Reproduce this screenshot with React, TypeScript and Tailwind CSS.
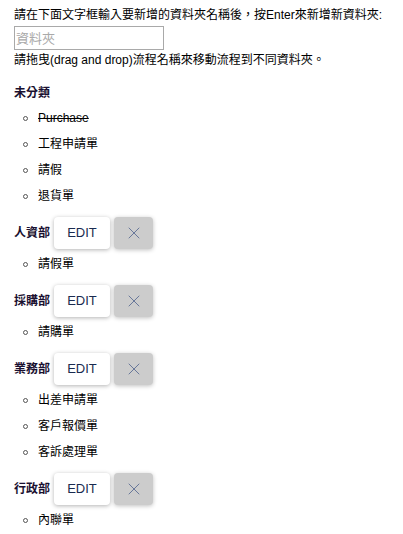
import { X } from "lucide-react";

interface Folder {
  name: string;
  flows: string[];
}

const folders: Folder[] = [
  { name: "人資部", flows: ["請假單"] },
  { name: "採購部", flows: ["請購單"] },
  { name: "業務部", flows: ["出差申請單", "客戶報價單", "客訴處理單"] },
  { name: "行政部", flows: ["內聯單"] },
];

const FlowItem = ({ label, struck }: { label: string; struck?: boolean }) => (
  <li className="flex items-center h-[26px]">
    <span className="ml-[9px] w-[5px] h-[5px] rounded-full border border-[#555]" />
    <span className={`ml-[10px] ${struck ? "line-through" : ""}`}>{label}</span>
  </li>
);

const App = () => {
  return (
    <div
      className="min-h-[534px] bg-white text-black text-[12px] leading-[16px] pl-[14px] pt-[7px]"
      style={{ fontFamily: '"Liberation Sans", "Noto Sans CJK TC", sans-serif' }}
    >
      <p>請在下面文字框輸入要新增的資料夾名稱後，按Enter來新增新資料夾:</p>
      <input
        type="text"
        placeholder="資料夾"
        className="mt-[3px] block w-[150px] h-[24px] border border-[#a9a9a9] px-px text-[13px] placeholder:text-[#a9a9a9] outline-none"
      />
      <p className="mt-[2px]">請拖曳(drag and drop)流程名稱來移動流程到不同資料夾。</p>

      {/* Uncategorized */}
      <h4 className="mt-[17px] font-bold text-[#1a1030]">未分類</h4>
      <ul className="mt-[4px]">
        <FlowItem label="Purchase" struck />
        <FlowItem label="工程申請單" />
        <FlowItem label="請假" />
        <FlowItem label="退貨單" />
      </ul>

      {/* Folders */}
      {folders.map((folder) => (
        <div key={folder.name}>
          <div className="mt-2 flex items-center h-[32px]">
            <span className="font-bold text-[#1a1030]">{folder.name}</span>
            <button className="ml-[4px] w-[56px] h-[32px] rounded bg-white text-[13px] text-[#1a2b50] shadow-[0_1px_4px_rgba(0,0,0,0.3)]">
              EDIT
            </button>
            <button className="ml-[4px] w-[39px] h-[32px] rounded bg-[#cccccc] flex items-center justify-center shadow-[0_1px_4px_rgba(0,0,0,0.25)]">
              <X className="w-[20px] h-[20px] text-[#5f7095]" strokeWidth={1.1} />
            </button>
          </div>
          <ul className="mt-[2px]">
            {folder.flows.map((flow) => (
              <FlowItem key={flow} label={flow} />
            ))}
          </ul>
        </div>
      ))}
    </div>
  );
};

export default App;
